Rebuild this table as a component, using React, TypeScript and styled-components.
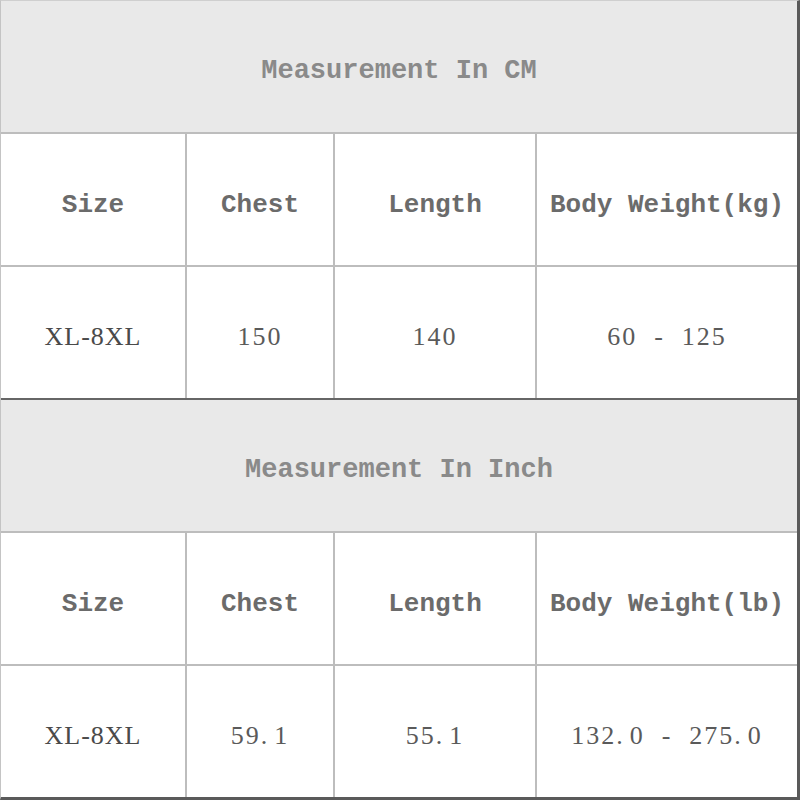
import React from 'react'
import styled, { createGlobalStyle } from 'styled-components'

interface SizeTable {
  title: string
  weightLabel: string
  chest: string
  length: string
  weight: string
}

const tables: SizeTable[] = [
  { title: 'Measurement In CM', weightLabel: 'Body Weight(kg)', chest: '150', length: '140', weight: '60 - 125' },
  { title: 'Measurement In Inch', weightLabel: 'Body Weight(lb)', chest: '59.1', length: '55.1', weight: '132.0 - 275.0' },
]

const GlobalStyle = createGlobalStyle`
  body {
    margin: 0;
    background: #ffffff;
  }
`

const Frame = styled.div`
  width: 800px;
  height: 800px;
  box-sizing: border-box;
  border-top: 1px solid #cfcfcf;
  border-left: 1px solid #c4c4c4;
  border-right: 3px solid #5a5a5a;
  border-bottom: 3px solid #5a5a5a;
  display: flex;
  flex-direction: column;
  gap: 2px;
  background: #666666;
`

const Section = styled.div`
  display: grid;
  grid-template-columns: 184px 146px 200px 1fr;
  grid-template-rows: repeat(3, 131px);
  gap: 2px;
  background: #bdbdbd;
`

const TitleCell = styled.div`
  grid-column: 1 / -1;
  background: #e9e9e9;
  display: flex;
  align-items: center;
  justify-content: center;
  padding-top: 8px;
  font-family: 'Liberation Mono', 'DejaVu Sans Mono', monospace;
  font-weight: bold;
  font-size: 27px;
  color: #8a8a8a;
`

const Cell = styled.div<{ $label?: boolean }>`
  background: #ffffff;
  display: flex;
  align-items: center;
  justify-content: center;
  white-space: pre;
  font-family: ${p => (p.$label ? "'Liberation Mono', monospace" : "'Liberation Serif', serif")};
  font-weight: ${p => (p.$label ? 'bold' : 'normal')};
  font-size: 26px;
  letter-spacing: ${p => (p.$label ? '0' : '2px')};
  color: ${p => (p.$label ? '#6b6b6b' : '#5a5a5a')};
  padding-top: ${p => (p.$label ? '10px' : '8px')};
`

const SizeName = styled.span`
  letter-spacing: 1px;
  color: #4a4a4a;
`

const Dot = styled.span`
  margin-right: 5px;
`

// the source font sets the decimal point wide, so pad it
function Value({ text }: { text: string }) {
  const parts = text.replace(' - ', '  -  ').split('.')
  return (
    <>
      {parts.map((p, i) => (
        <React.Fragment key={i}>
          {p}
          {i < parts.length - 1 && <Dot>.</Dot>}
        </React.Fragment>
      ))}
    </>
  )
}

function SizeSection({ table }: { table: SizeTable }) {
  return (
    <Section>
      <TitleCell>{table.title}</TitleCell>
      <Cell $label>Size</Cell>
      <Cell $label>Chest</Cell>
      <Cell $label>Length</Cell>
      <Cell $label>{table.weightLabel}</Cell>
      <Cell><SizeName>XL-8XL</SizeName></Cell>
      <Cell><Value text={table.chest} /></Cell>
      <Cell><Value text={table.length} /></Cell>
      <Cell><Value text={table.weight} /></Cell>
    </Section>
  )
}

export default function App() {
  return (
    <>
      <GlobalStyle />
      <Frame>
        {tables.map(t => (
          <SizeSection key={t.title} table={t} />
        ))}
      </Frame>
    </>
  )
}
